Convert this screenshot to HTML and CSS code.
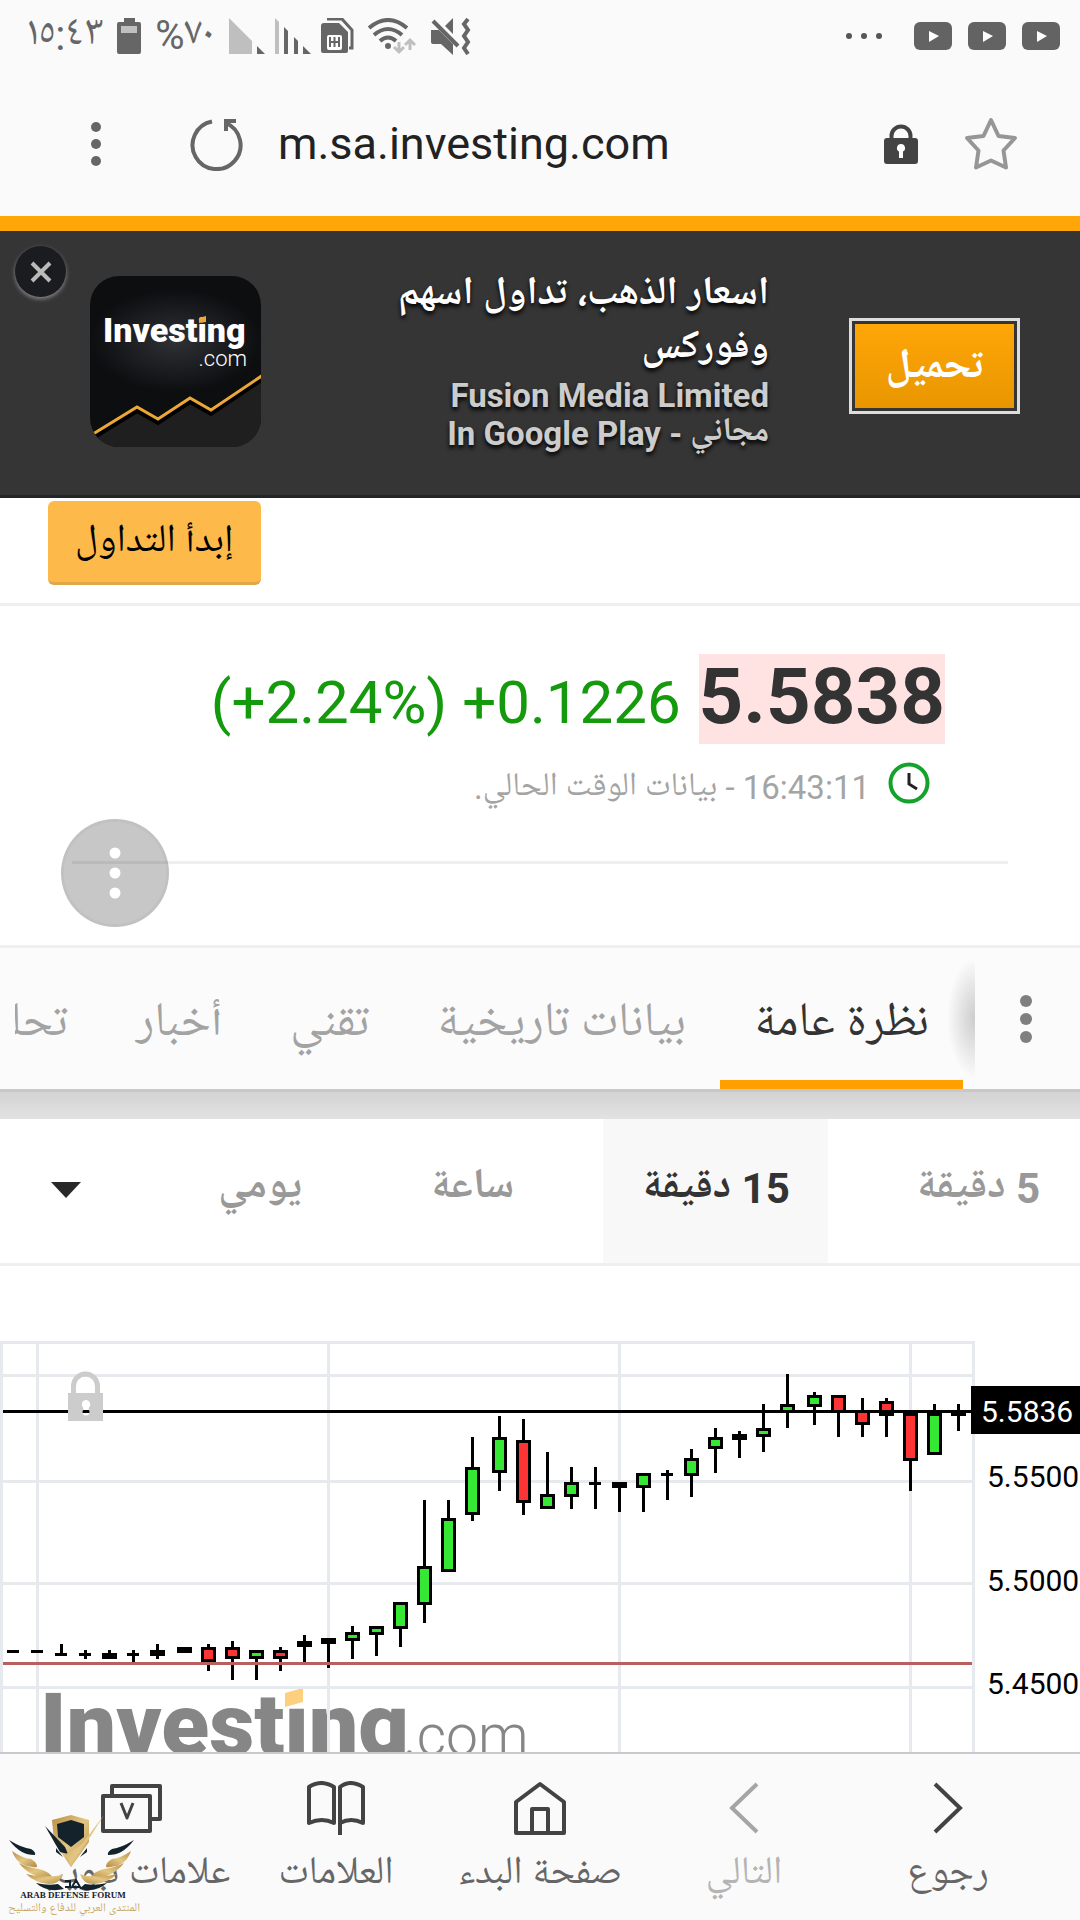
FILE: index.html
```html
<!DOCTYPE html>
<html lang="ar" dir="rtl">
<head>
<meta charset="utf-8">
<meta name="viewport" content="width=device-width, initial-scale=1">
<title>m.sa.investing.com</title>
<link rel="stylesheet" href="styles.css">
</head>
<body>

<header class="status" dir="ltr">
  <div class="status-side">
    <span class="clock-text">١٥:٤٣</span>
    <svg class="battery" width="24" height="36" viewBox="0 0 24 36" aria-hidden="true"><path fill="#666" d="M7 0h11v4h4a2 2 0 0 1 2 2v28a2 2 0 0 1-2 2H2a2 2 0 0 1-2-2V6a2 2 0 0 1 2-2h5z"/><path fill="#c0c0c0" d="M4 8h16v7H4z"/></svg>
    <span>%٧٠</span>
    <svg width="82" height="36" viewBox="0 0 82 36" aria-hidden="true"><path fill="#bfbfbf" d="M0 0L23 23V36H0zM46 0l4 4v32h-4z"/><path fill="#666" d="M28 28l8 8h-8zM55 9l4 4v23h-4zM65 19l4 4v13h-4zM74 28l8 8h-8z"/></svg>
    <svg class="sim" width="33" height="36" viewBox="0 0 33 36" aria-hidden="true"><path fill="#666" d="M3 5h15l9 9v19a2 2 0 0 1-2 2H2a2 2 0 0 1-2-2V8a3 3 0 0 1 3-3z"/><path fill="none" stroke="#666" stroke-width="3" d="M6 1h15l10 11v18h-3"/><rect x="6" y="17" width="15" height="15" rx="2" fill="#fff"/><path fill="none" stroke="#666" stroke-width="2" d="M9 19v10M13.500 19v10M18 19v10M8 24h11"/></svg>
    <svg class="wifi" width="49" height="37" viewBox="0 0 49 37" aria-hidden="true"><g fill="none" stroke="#666" stroke-width="4"><path d="M1 10q19-16 38 0"/><path d="M6 17q14-12 28 0"/><path d="M12 23q8-7 16 0"/></g><circle cx="20" cy="28" r="3" fill="#666"/><path fill="none" stroke="#bfbfbf" stroke-width="3" d="M31 24v10m-5-5l5 5 5-5M42 32V22m-5 5l5-5 5 5"/></svg>
    <svg width="41" height="37" viewBox="0 0 41 37" aria-hidden="true"><path fill="#666" d="M0 12h8l14 14v11L10 26H2a2 2 0 0 1-2-2zM22 0v16l-8-8z"/><path fill="none" stroke="#666" stroke-width="4" d="M2 3l25 25"/><path fill="none" stroke="#666" stroke-width="4" d="M37 1l-4 5 4 6-4 6 4 6-4 6 4 6"/></svg>
  </div>
  <div class="status-side status-right">
    <svg width="36" height="8" viewBox="0 0 36 8" fill="#555" aria-hidden="true"><circle cx="3" cy="4" r="3"/><circle cx="18" cy="4" r="3"/><circle cx="33" cy="4" r="3"/></svg>
    <svg width="38" height="28" viewBox="0 0 38 28" aria-hidden="true"><rect width="38" height="28" rx="6" fill="#636363"/><path fill="#fff" d="M15 9l10 5-10 6z"/></svg>
    <svg width="38" height="28" viewBox="0 0 38 28" aria-hidden="true"><rect width="38" height="28" rx="6" fill="#636363"/><path fill="#fff" d="M15 9l10 5-10 6z"/></svg>
    <svg width="38" height="28" viewBox="0 0 38 28" aria-hidden="true"><rect width="38" height="28" rx="6" fill="#636363"/><path fill="#fff" d="M15 9l10 5-10 6z"/></svg>
  </div>
</header>

<div class="address" dir="ltr">
  <button class="icon-btn menu-btn" aria-label="القائمة"><svg width="12" height="46" viewBox="0 0 12 46" fill="#666"><circle cx="6" cy="6" r="5"/><circle cx="6" cy="23" r="5"/><circle cx="6" cy="40" r="5"/></svg></button>
  <button class="icon-btn" aria-label="تحديث"><svg width="54" height="54" viewBox="0 0 54 54" fill="none" stroke="#666"><path stroke-width="4" d="M22 4.500A24 24 0 1 0 36 6"/><path stroke-width="4" d="M46 4H36v10"/></svg></button>
  <a class="url" href="#">m.sa.investing.com</a>
  <svg width="34" height="40" viewBox="0 0 34 40" aria-hidden="true"><path fill="none" stroke="#434343" stroke-width="4" d="M7.500 16v-4a9.500 9.500 0 0 1 19 0v4"/><rect y="14" width="34" height="26" rx="3" fill="#434343"/><path fill="#fff" d="M17 20a4 4 0 0 1 2 7.500V34h-4v-6.500A4 4 0 0 1 17 20z"/></svg>
  <button class="icon-btn star" aria-label="إضافة إلى العلامات"><svg width="54" height="54" viewBox="0 0 54 54"><path fill="none" stroke="#969696" stroke-width="4" stroke-linejoin="round" d="M27 3l7.500 16L51 21 39.500 33.500 42 50.500 27 43.500 12 50.500 14.500 33.500 3 21l16.500-2z"/></svg></button>
</div>

<main class="page">
  <aside class="banner">
    <button class="close" aria-label="إغلاق"><svg width="22" height="22" viewBox="0 0 22 22"><path stroke="#bbb" stroke-width="4" d="M2 2l18 18M20 2L2 20"/></svg></button>
    <a class="download" href="#"><span>تحميل</span></a>
    <div class="banner-text">
      <strong class="banner-title">اسعار الذهب، تداول اسهم وفوركس</strong>
      <span>Fusion Media Limited</span>
      <span>مجاني - In Google Play</span>
    </div>
    <svg class="app-icon" width="171" height="171" viewBox="0 0 171 171" role="img" aria-label="Investing.com">
      <defs>
        <clipPath id="tile"><rect width="171" height="171" rx="29"/></clipPath>
        <radialGradient id="glow" cx="0.5" cy="0.38" r="0.5" gradientTransform="matrix(1 0 0 .6 0 .15)"><stop offset="0" stop-color="#303135"/><stop offset="1" stop-color="#0d0e10"/></radialGradient>
      </defs>
      <g clip-path="url(#tile)">
        <rect width="171" height="171" fill="url(#glow)"/>
        <path fill="#1f1f1f" d="M5 157L47 131 68 143 100 122 121 134 171 100V171H0V160z"/>
        <path fill="none" stroke="#000" stroke-width="4" d="M3 162L47 135 68 147 100 126 121 138 173 103"/>
        <path fill="none" stroke="#eba834" stroke-width="3" d="M3 158L47 131 68 143 100 122 121 134 173 99"/>
        <text class="logo-bold" x="13" y="66" font-size="34" fill="#fff">Investing</text>
        <path fill="#eba834" d="M109 42l7-2v6l-7 1z"/>
        <text class="logo-light" x="157" y="90" font-size="22" text-anchor="end" fill="#fff">.com</text>
      </g>
    </svg>
  </aside>

  <div class="trade-row"><a class="trade" href="#">إبدأ التداول</a></div>

  <section class="quote">
    <p class="price-line"><b class="price">5.5838</b> <span class="change" dir="ltr">(+2.24%) +0.1226</span></p>
    <p class="time-line">
      <svg width="42" height="42" viewBox="0 0 42 42" aria-hidden="true" fill="none"><circle cx="21" cy="21" r="18.500" stroke="#14a12c" stroke-width="4"/><path stroke="#222" stroke-width="3" d="M21 11v11l8 5"/></svg>
      <span class="time-text">16:43:11 - بيانات الوقت الحالي.</span>
    </p>
    <hr>
    <button class="fab" aria-label="المزيد"><svg width="12" height="52" viewBox="0 0 12 52" fill="#fff"><circle cx="6" cy="6" r="5.500"/><circle cx="6" cy="26" r="5.500"/><circle cx="6" cy="46" r="5.500"/></svg></button>
  </section>

  <nav class="tabs">
    <button class="tabs-more" aria-label="كل الأقسام"><svg width="12" height="48" viewBox="0 0 12 48" fill="#7f7f7f"><circle cx="6" cy="6" r="6"/><circle cx="6" cy="24" r="6"/><circle cx="6" cy="42" r="6"/></svg></button>
    <div class="tab-list">
      <a class="tab tab-on" href="#">نظرة عامة</a>
      <a class="tab" href="#">بيانات تاريخية</a>
      <a class="tab" href="#">تقني</a>
      <a class="tab" href="#">أخبار</a>
      <a class="tab" href="#">تحليل</a>
    </div>
  </nav>
  <div class="band"></div>

  <div class="frames">
    <button class="frame frame-first">5 دقيقة</button>
    <button class="frame frame-on">15 دقيقة</button>
    <button class="frame">ساعة</button>
    <button class="frame">يومي</button>
    <button class="frame frame-more" aria-label="المزيد"><svg width="30" height="16" viewBox="0 0 30 16"><path fill="#282828" d="M0 0h30L15 16z"/></svg></button>
  </div>

  <svg class="chart" viewBox="0 0 1080 560" role="img" aria-label="5.5836">
    <g transform="translate(0 64)">
      <text class="logo-bold" x="40" y="425" font-size="88" fill="#868686">Investing</text>
      <path fill="#fff" d="M283 354h26v23h-26z"/>
      <path fill="#fdd080" d="M285 363l18-5v14l-18 5z"/>
      <text class="logo-light" x="403" y="425" font-size="57" fill="#868686">.com</text>
      <path fill="none" stroke="#e6e9ed" stroke-width="3" d="M0 12.500H975M3 45.500H973M3 151.500H973M3 253.500H973M3 357.500H973M1.500 12V496M37.500 12V496M328.500 12V496M619.500 12V496M910.500 12V496M973.500 12V496"/>
      <path fill="none" stroke="#000" stroke-width="3" d="M61.500 314V325M85.500 320V329M109.500 320V329M133.500 320V332M157.500 314V329M208.500 314V341M232.500 311V350M256.500 320V350M280.500 317V341M304.500 305V332M328.500 308V338M352.500 296V329M376.500 296V326M400.500 272V317M424.500 170V293M448.500 170V240M472.500 107V191M499.500 86V161M523.500 89V185M547.500 122V179M571.500 137V179M595.500 137V179M619.500 152V182M643.500 143V182M667.500 140V170M691.500 119V167M715.500 98V143M739.500 101V128M763.500 74V122M787.500 44V98M814.500 62V95M838.500 65V107M862.500 68V107M886.500 68V107M910.500 80V161M934.500 74V125M958.500 74V101"/>
      <path fill="none" stroke="#000" stroke-width="3" d="M7 321.500h12M31 321.500h12M55 324.500h12M79 324.500h12M127 324.500h12M589 153.500h12M661 144.500h12"/>
      <path d="M102 323h15v6h-15zM150 320h15v6h-15zM177 317h15v6h-15zM297 311h15v6h-15zM321 308h15v6h-15zM612 152h15v6h-15zM732 104h15v6h-15zM951 80h15v6h-15z"/>
      <g stroke="#000" stroke-width="3">
        <path fill="#34e834" d="M250.500 321.500h12v6h-12zM346.500 303.500h12v6h-12zM370.500 297.500h12v6h-12zM394.500 273.500h12v24h-12zM418.500 237.500h12v36h-12zM442.500 189.500h12v51h-12zM466.500 138.500h12v45h-12zM493.500 108.500h12v33h-12zM541.500 165.500h12v12h-12zM565.500 153.500h12v12h-12zM637.500 144.500h12v12h-12zM685.500 129.500h12v15h-12zM709.500 108.500h12v9h-12zM757.500 99.500h12v6h-12zM781.500 75.500h12v6h-12zM808.500 66.500h12v9h-12zM928.500 84.500h12v39h-12z"/>
        <path fill="#fd3434" d="M202.500 318.500h12v12h-12zM226.500 318.500h12v9h-12zM274.500 321.500h12v6h-12zM517.500 111.500h12v60h-12zM832.500 66.500h12v15h-12zM856.500 81.500h12v12h-12zM880.500 72.500h12v12h-12zM904.500 84.500h12v45h-12z"/>
      </g>
      <path stroke="#000" stroke-width="3" d="M3 81.500H973"/>
      <path stroke="#b86060" stroke-width="3" d="M3 333.500H972"/>
      <path fill="#ccc" fill-rule="evenodd" d="M68 63h3v-7a14 14 0 0 1 29 0v7h3v28H68zM76 63h19v-7a9.500 9.500 0 0 0-19 0zM85.500 70a4.500 4.500 0 0 0-2 8l-1 4a3 3 0 0 0 7 0l-1-4a4.500 4.500 0 0 0-3-8z"/>
      <path d="M971 56h109v48H971z"/>
      <g font-size="30">
        <text x="981" y="92" fill="#fff">5.5836</text>
        <text x="987" y="157">5.5500</text>
        <text x="987" y="261">5.5000</text>
        <text x="987" y="364">5.4500</text>
      </g>
    </g>
  </svg>
</main>

<nav class="bottom">
  <a class="nav-item" href="#"><svg width="54" height="54" viewBox="0 0 54 54" fill="none" stroke="#434343" stroke-width="4"><path d="M14 3l25 24-25 24"/></svg><span>رجوع</span></a>
  <a class="nav-item nav-off" href="#"><svg width="54" height="54" viewBox="0 0 54 54" fill="none" stroke="#a5a5a5" stroke-width="4"><path d="M40 3L15 27l25 24"/></svg><span>التالي</span></a>
  <a class="nav-item" href="#"><svg width="54" height="54" viewBox="0 0 54 54" fill="none" stroke="#434343" stroke-width="4" stroke-linejoin="round"><path d="M3 52V21L27 3l24 18v31zM19 52V28h16v24"/></svg><span>صفحة البدء</span></a>
  <a class="nav-item" href="#"><svg width="58" height="54" viewBox="0 0 58 54" fill="none" stroke="#434343" stroke-width="4" stroke-linejoin="round"><path d="M2 42V6q12-8 25 0v36q-12-6-25 0zM33 54V6q10-8 23 0v36q-12-6-23 0"/></svg><span>العلامات</span></a>
  <a class="nav-item" href="#"><svg width="62" height="54" viewBox="0 0 62 54" fill="none" stroke="#434343" stroke-width="4" stroke-linejoin="round"><path d="M11 14V5h48v33H49"/><rect x="2" y="15" width="47" height="35"/><path stroke-width="3" d="M20 22l6 15 6-15"/></svg><span>علامات تبويب</span></a>

  <svg class="forum" width="136" height="106" viewBox="0 0 136 106" role="img" aria-label="Arab Defense Forum">
    <defs>
      <linearGradient id="gold" x1="0" y1="0" x2="1" y2="1"><stop offset="0" stop-color="#b98f45"/><stop offset=".5" stop-color="#e3c682"/><stop offset="1" stop-color="#b08b48"/></linearGradient>
      <g id="wing">
        <path fill="#14222b" d="M1 26q13 8 22 9 5 3 4 6-8 0-13-3Q7 34 1 26z"/>
        <path fill="url(#gold)" d="M4 37q10 7 19 8 6 3 6 8-8 1-15-3Q7 46 4 37z"/>
        <path fill="url(#gold)" d="M11 49q10 5 20 6 12 3 14 10-10 0-19-4-9-4-15-12z"/>
        <path fill="url(#gold)" d="M18 60q12 3 22 2 9 1 15-2-3 10-14 10-14-1-23-10z"/>
        <path fill="#14222b" d="M28 69q12 3 22 1l6 5q-17 4-28-6z"/>
        <path fill="#14222b" d="M48 34l7 9-7-5z"/>
      </g>
    </defs>
    <path fill="url(#gold)" d="M44 6l19-5 18 5v22L63 53 46 28z"/>
    <path fill="#14222b" d="M49 10l14-4 13 4v13L63 33 50 23z"/>
    <path fill="#14222b" d="M37 12l20 21 3 7-8-2z"/>
    <path fill="url(#gold)" d="M96 1L63 53l-5-13 16-10z"/>
    <use href="#wing"/>
    <use href="#wing" transform="translate(127 0) scale(-1 1)"/>
    <path fill="none" stroke="#14222b" stroke-width="2" d="M57 67h5v6h-5m7 0l4-7 4 7z"/>
    <text class="forum-en" x="65" y="84" text-anchor="middle" font-size="9">ARAB DEFENSE FORUM</text>
    <text class="forum-ar" x="66" y="99" text-anchor="middle" font-size="12">المنتدى العربي للدفاع والتسليح</text>
  </svg>
</nav>

</body>
</html>
```
FILE: styles.css
```css
* { box-sizing: border-box; }

body {
  margin: 0;
  height: 100vh;
  display: flex;
  flex-direction: column;
  background: #fff;
  color: #333;
  font-family: Roboto, "Noto Naskh Arabic UI", "Noto Naskh Arabic", "Noto Sans Arabic", "DejaVu Sans", sans-serif;
  font-size: 39px;
}

a { color: inherit; text-decoration: none; }
button { border: 0; padding: 0; background: none; color: inherit; font: inherit; }
svg { display: block; flex: none; direction: ltr; }
p { margin: 0; }

.status {
  display: flex;
  justify-content: space-between;
  padding: 12px 20px 12px 26px;
  background: #fafafa;
  color: #666;
  font-size: 40px;
  line-height: 48px;
}
.status-side { display: flex; align-items: center; gap: 14px; }
.clock-text { font-size: 42px; }
.sim { margin-left: -4px; }
.status-right { gap: 16px; }
.status-right svg:first-child { margin-right: 16px; }

.address {
  display: flex;
  align-items: center;
  gap: 34px;
  padding: 30px 62px 30px 90px;
  height: 144px;
  background: #fafafa;
  color: #222;
}
.menu-btn { margin-right: 54px; }
.url { flex: 1; font-size: 45px; line-height: 60px; }
.star { margin-left: 12px; }

.page {
  flex: 1;
  min-height: 0;
  overflow-y: auto;
  scrollbar-width: none;
  border-top: 15px solid #ffa608;
}

.banner {
  position: relative;
  display: flex;
  align-items: center;
  padding: 24px 60px 28px 90px;
  height: 267px;
  background: #353535;
  border-bottom: 3px solid #222428;
}
.close {
  position: absolute;
  top: 15px;
  left: 15px;
  width: 51px;
  height: 51px;
  display: grid;
  place-items: center;
  border-radius: 50%;
  background: #1b1c20;
  box-shadow: 0 2px 4px #888;
}
.download {
  margin-top: 10px;
  padding: 3px;
  border: 3px solid #ddd;
  color: #fff;
  font-size: 42px;
  font-weight: 700;
}
.download span {
  display: grid;
  place-items: center;
  width: 159px;
  height: 84px;
  background: linear-gradient(#ffa608, #e89600);
}
.banner-text {
  width: 400px;
  margin-right: 80px;
  display: flex;
  flex-direction: column;
  color: #ccc;
  font-size: 33px;
  font-weight: 700;
  line-height: 38px;
  text-shadow: 0 3px 4px #000;
}
.banner-title { color: #fff; font-size: 39px; line-height: 54px; }
.app-icon { margin-right: auto; }

.logo-bold { font-weight: 900; }
.logo-light { font-weight: 300; }

.trade-row {
  display: flex;
  justify-content: flex-end;
  padding: 3px 48px 18px;
  border-bottom: 3px solid #efefef;
}
.trade {
  width: 213px;
  height: 84px;
  line-height: 84px;
  text-align: center;
  color: #000;
  background: #fdb94a;
  border-bottom: 3px solid #dfa64a;
  border-radius: 6px;
}

.quote { position: relative; padding: 48px 72px 81px; }
.price-line { display: flex; align-items: baseline; gap: 18px; padding-right: 63px; }
.price {
  padding-bottom: 4px;
  background: #ffe3e2;
  font-size: 78px;
  line-height: 86px;
}
.change { color: #149a0c; font-size: 60px; line-height: 60px; }
.time-line {
  display: flex;
  align-items: center;
  gap: 18px;
  margin: 10px 0 49px;
  padding-right: 78px;
  color: #a4a4a4;
  font-size: 33px;
  line-height: 48px;
}
.time-text { padding-top: 10px; }
.quote hr { margin: 0; border: 0; height: 3px; background: #efefef; }
.fab {
  position: absolute;
  left: 61px;
  bottom: 18px;
  width: 108px;
  height: 108px;
  display: grid;
  place-items: center;
  border: 3px solid #00000008;
  border-radius: 50%;
  background: #00000038;
}

.tabs {
  display: flex;
  height: 147px;
  border-top: 3px solid #efefef;
  border-bottom: 3px solid #c8c8c8;
  background: #fbfbfb;
}
.tabs-more { flex: none; width: 105px; display: grid; place-items: center; padding-right: 4px; }
.tab-list {
  flex: 1;
  min-width: 0;
  display: flex;
  overflow: hidden;
  padding-right: 12px;
  margin-left: 15px;
  background: radial-gradient(ellipse 28px 60px at right, #00000030, #0000);
}
.tab {
  flex: none;
  padding: 27px 34px 0;
  line-height: 100px;
  font-size: 48px;
  color: #a3a3a3;
}
.tab-on { color: #333; border-bottom: 9px solid #ffa000; }
.band { height: 27px; background: linear-gradient(#d3d3d3, #e2e2e2); }

.frames {
  display: grid;
  grid-template-columns: 252fr 225fr 262fr 162fr 179fr;
  height: 147px;
  border-bottom: 3px solid #efefef;
  color: #999;
  font-size: 42px;
  font-weight: 700;
}
.frame { display: flex; align-items: center; justify-content: center; padding-bottom: 9px; }
.frame-first { justify-content: flex-start; padding-right: 40px; }
.frame-on { background: #f8f8f8; color: #333; }
.frame-more { justify-content: flex-end; padding-left: 51px; padding-bottom: 3px; }

.chart { width: 100%; height: auto; }

.bottom {
  position: relative;
  display: flex;
  padding: 27px 30px 0;
  height: 168px;
  background: #fafafa;
  border-top: 2px solid #cacaca;
  color: #666;
}
.nav-item {
  flex: 1 1 0;
  display: flex;
  flex-direction: column;
  align-items: center;
  gap: 14px;
  line-height: 52px;
  white-space: nowrap;
}
.nav-off { color: #b4b4b4; }
.forum { position: absolute; left: 8px; bottom: 0; }
.forum-en { font-family: "Liberation Serif", serif; font-weight: 700; fill: #14222b; }
.forum-ar { fill: #c8a96a; direction: rtl; }
```
